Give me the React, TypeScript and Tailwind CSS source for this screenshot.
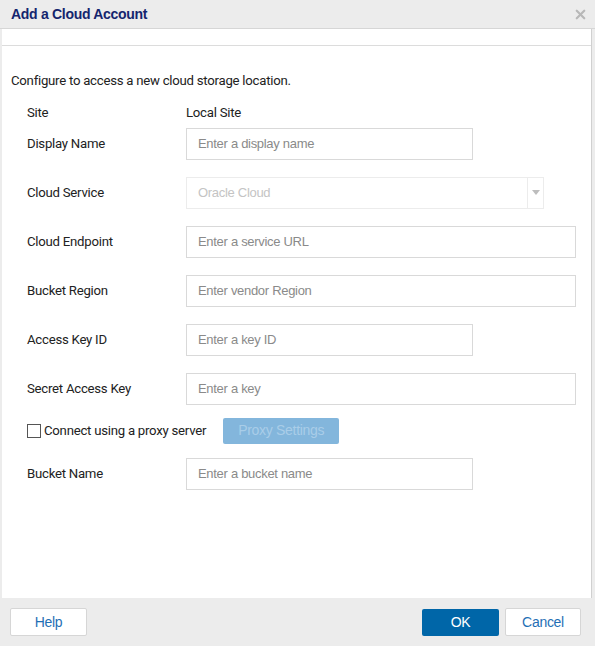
import { X } from 'lucide-react'

const label = "text-[13.2px] text-[#222] font-['Roboto',sans-serif] tracking-[-0.25px]"
const inputCls =
  "h-[32px] border border-[#d9d9d9] bg-white px-[11px] text-[13px] tracking-[-0.3px] font-['Liberation_Sans',sans-serif] text-[#555] placeholder:text-[#8a8a8a] outline-none"

function Row({ name, children }: { name: string; children: React.ReactNode }) {
  return (
    <div className="flex items-center h-[32px]">
      <span className={`${label} w-[159px] shrink-0`}>{name}</span>
      {children}
    </div>
  )
}

export default function App() {
  return (
    <div className="w-[595px] h-[646px] bg-[#ececec] flex flex-col overflow-hidden">
      {/* title bar */}
      <div className="h-[29px] shrink-0 flex items-center justify-between pl-[11px] pr-[7px] border-b border-[#d6d6d6]">
        <span className="text-[14px] tracking-[-0.3px] font-bold text-[#14256e] font-['Liberation_Sans',sans-serif]">
          Add a Cloud Account
        </span>
        <X size={15} strokeWidth={3.5} className="text-[#b8b8b8]" />
      </div>

      {/* content panel */}
      <div className="flex-1 ml-[2px] mr-[3px] border-r border-[#d0d0d0] bg-white flex flex-col">
        <div className="h-[17px] border-b border-[#dcdcdc]" />
        <div className="pl-[9px] pt-[25px]">
          <p className={label}>Configure to access a new cloud storage location.</p>
          <div className="pl-[16px] pt-[12px] flex flex-col">
            <div className="flex items-center h-[20px]">
              <span className={`${label} w-[159px]`}>Site</span>
              <span className={label}>Local Site</span>
            </div>
            <div className="flex flex-col gap-[17px] pt-[5px]">
              <Row name="Display Name">
                <input className={`${inputCls} w-[287px]`} placeholder="Enter a display name" />
              </Row>
              <Row name="Cloud Service">
                <div className="flex h-[32px] w-[358px] border border-[#ececec]">
                  <span className="flex-1 flex items-center px-[11px] text-[13px] tracking-[-0.3px] text-[#c4c4c4] font-['Liberation_Sans',sans-serif]">
                    Oracle Cloud
                  </span>
                  <span className="w-[16px] border-l border-[#ececec] flex items-center justify-center">
                    <svg width="8" height="5" viewBox="0 0 8 5">
                      <path d="M0 0h8L4 5z" fill="#bdbdbd" />
                    </svg>
                  </span>
                </div>
              </Row>
              <Row name="Cloud Endpoint">
                <input className={`${inputCls} w-[390px]`} placeholder="Enter a service URL" />
              </Row>
              <Row name="Bucket Region">
                <input className={`${inputCls} w-[390px]`} placeholder="Enter vendor Region" />
              </Row>
              <Row name="Access Key ID">
                <input className={`${inputCls} w-[287px]`} placeholder="Enter a key ID" />
              </Row>
              <Row name="Secret Access Key">
                <input className={`${inputCls} w-[390px]`} placeholder="Enter a key" />
              </Row>
            </div>
            <div className="flex items-center h-[26px] mt-[13px]">
              <span className="w-[14px] h-[14px] border border-[#555] bg-white mr-[3px]" />
              <span className={label}>Connect using a proxy server</span>
              <button className="ml-[17px] h-[26px] w-[116px] rounded-[2px] bg-[#83b6dc] text-[14px] tracking-[-0.3px] text-[#a9cde8] font-['Liberation_Sans',sans-serif]">
                Proxy Settings
              </button>
            </div>
            <div className="mt-[14px]">
              <Row name="Bucket Name">
                <input className={`${inputCls} w-[287px]`} placeholder="Enter a bucket name" />
              </Row>
            </div>
          </div>
        </div>
      </div>

      {/* footer */}
      <div className="h-[48px] shrink-0 flex items-center px-[10px] font-['Liberation_Sans',sans-serif] text-[14px] tracking-[-0.3px]">
        <button className="w-[77px] h-[28px] bg-white border border-[#d6d6d6] rounded-[2px] text-[#1f6fb5]">Help</button>
        <div className="flex-1" />
        <button className="w-[77px] h-[27px] bg-[#0066a8] rounded-[2px] text-white">OK</button>
        <button className="ml-[6px] w-[76px] h-[28px] bg-white border border-[#d6d6d6] rounded-[2px] text-[#1f6fb5] mr-[4px]">Cancel</button>
      </div>
    </div>
  )
}
